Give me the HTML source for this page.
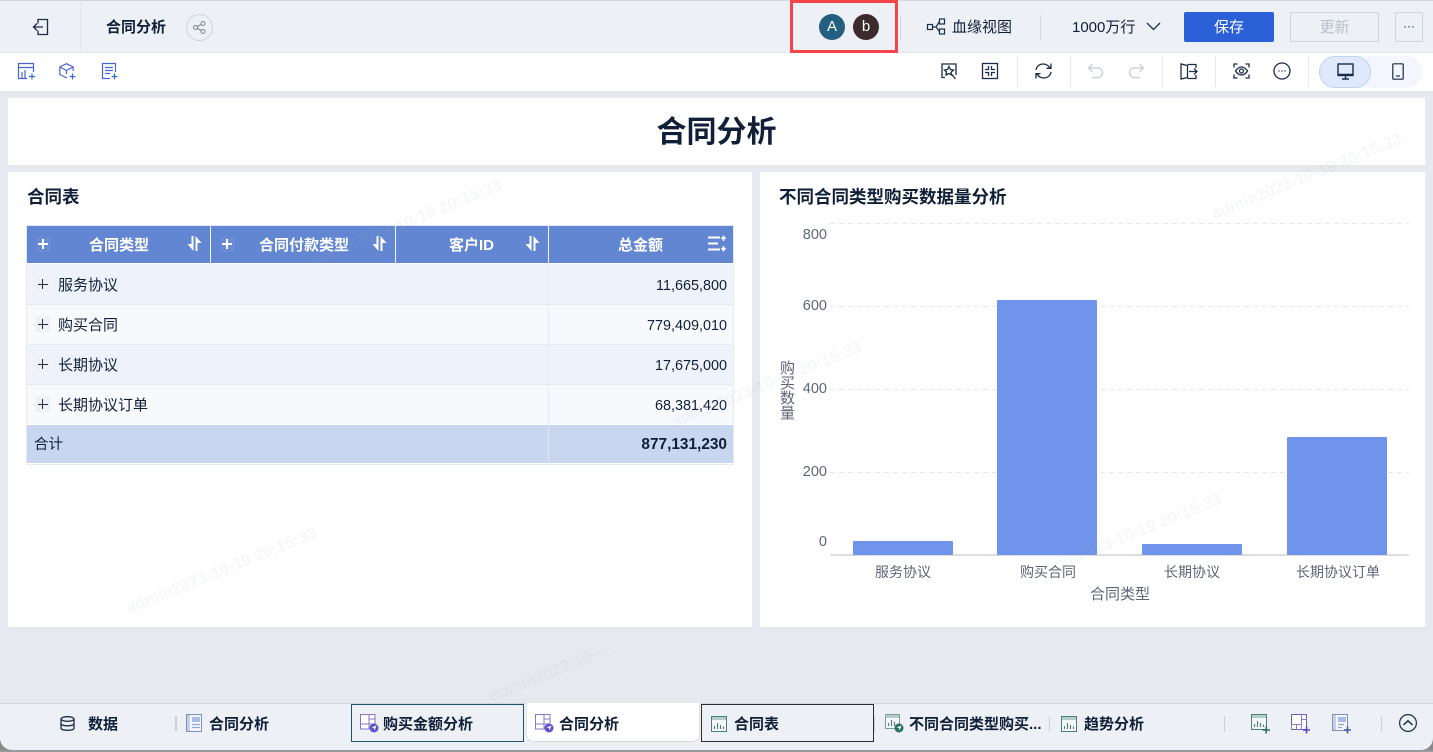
<!DOCTYPE html>
<html lang="zh"><head><meta charset="utf-8"><title>合同分析</title>
<style>
*{box-sizing:border-box}
html,body{margin:0;padding:0;width:1433px;height:752px;overflow:hidden;background:#e8e9ee;font-family:"Liberation Sans","Noto Sans CJK SC",sans-serif;color:#0f1f38}
.a{position:absolute}
.t{position:absolute;white-space:nowrap;line-height:22px;font-size:15px}
.b{font-weight:700}
svg{position:absolute;overflow:visible;fill:none}
.wm{position:absolute;white-space:nowrap;font-size:16.5px;font-weight:700;color:rgba(170,175,190,.1);transform:rotate(-22deg);transform-origin:0 100%;line-height:20px;z-index:5}
.r{text-align:right}
.n{font-size:14.4px}
.th{color:#fff;font-weight:700}
.plus{position:absolute;width:15px;height:15px;background:#eef0f4}
.plus:before{content:"";position:absolute;left:3px;top:7px;width:10px;height:1px;background:#1c2a40}
.plus:after{content:"";position:absolute;left:7px;top:2px;width:1px;height:10px;background:#1c2a40}
.hp{position:absolute;width:15px;height:15px;background:#6a8cd6}
.hp:before{content:"";position:absolute;left:2px;top:6px;width:10px;height:2px;background:#fff}
.hp:after{content:"";position:absolute;left:6px;top:2px;width:2px;height:10px;background:#fff}
.ax{color:#5d6675;font-size:14px;line-height:20px}
</style></head><body>

<!-- top bar -->
<div class="a" style="left:0;top:0;width:1433px;height:53px;background:#edf0f5;border-top:1px solid #d5d6da;border-bottom:1px solid #e3e5ea"></div>
<div class="a" style="left:80px;top:2px;width:1px;height:50px;background:#e3e6ec"></div>
<svg style="left:32px;top:18px" width="18" height="18" viewBox="0 0 18 18" stroke="#1a2c48" stroke-width="1.300"><path d="M6 12.500V16.500H15.500V1.500H6V5.500"/><path d="M11 9H1.500M5 5.500L1.500 9L5 12.500"/></svg>
<div class="t b" style="left:106px;top:17px">合同分析</div>
<div class="a" style="left:186px;top:14px;width:27px;height:27px;border:1px solid #cfd2d9;border-radius:50%"></div>
<svg style="left:193px;top:21px" width="13" height="13" viewBox="0 0 13 13" stroke="#7c8493" stroke-width="1"><circle cx="2.500" cy="6.500" r="2"/><circle cx="10" cy="2.500" r="2"/><circle cx="10" cy="10.500" r="2"/><path d="M4.300 5.500L8.200 3.500M4.300 7.500L8.200 9.500"/></svg>

<div class="a" style="left:819px;top:14px;width:26px;height:26px;border-radius:50%;background:#23607f;color:#fff;font-size:15px;line-height:26px;text-align:center">A</div>
<div class="a" style="left:853px;top:14px;width:26px;height:26px;border-radius:50%;background:#3b2a2e;color:#fff;font-size:15px;line-height:26px;text-align:center">b</div>
<div class="a" style="left:790px;top:0;width:108px;height:53px;border:3px solid #f5444a;z-index:6"></div>

<div class="a" style="left:900px;top:15px;width:1px;height:25px;background:#d5d8de"></div>
<svg style="left:927px;top:18px" width="19" height="18" viewBox="0 0 19 18" stroke="#1a2c48" stroke-width="1.200"><rect x=".5" y="6.500" width="5" height="5"/><rect x="12.500" y="1" width="5" height="5"/><rect x="12.500" y="11" width="5" height="5"/><path d="M5.500 9H9L12.500 3.500M9 9L12.500 13.500"/></svg>
<div class="t" style="left:952px;top:17px">血缘视图</div>
<div class="a" style="left:1040px;top:15px;width:1px;height:25px;background:#d5d8de"></div>
<div class="t" style="left:1072px;top:17px">1000万行</div>
<svg style="left:1146px;top:22px" width="15" height="9" viewBox="0 0 15 9" stroke="#1a2c48" stroke-width="1.300"><path d="M1 1L7.500 7.500L14 1"/></svg>
<div class="a" style="left:1184px;top:12px;width:90px;height:30px;background:#2b60d9;border-radius:2px;color:#fff;font-size:15px;line-height:32px;text-align:center">保存</div>
<div class="a" style="left:1290px;top:12px;width:89px;height:30px;border:1px solid #cfd3da;border-radius:2px;color:#b9bec8;font-size:15px;line-height:30px;text-align:center">更新</div>
<div class="a" style="left:1395px;top:12px;width:28px;height:30px;border:1px solid #cfd3da;border-radius:2px;color:#1a2c48;font-size:12px;line-height:26px;text-align:center">···</div>

<!-- toolbar -->
<div class="a" style="left:0;top:53px;width:1433px;height:38px;background:#fff"></div>
<svg style="left:18px;top:63px" width="17" height="17" viewBox="0 0 17 17" stroke="#4a63d8" stroke-width="1.200"><path d="M9 15.500H.5V.5H15.500V9M.5 4.500H15.500M4 15V9M7 15V7"/><path d="M11 13.500H17M14 10.500V16.500" stroke="#2c6fd9"/></svg>
<svg style="left:59px;top:63px" width="17" height="17" viewBox="0 0 17 17" stroke="#4a63d8" stroke-width="1.200"><path d="M8 15L.8 11.500V4L7.500 .7L14.200 4V8M.8 4L7.500 7.500L14.200 4M7.500 7.500V11"/><path d="M10.500 13.500H16.500M13.500 10.500V16.500" stroke="#2c6fd9"/></svg>
<svg style="left:101px;top:63px" width="17" height="17" viewBox="0 0 17 17" stroke="#4a63d8" stroke-width="1.200"><path d="M9 15.500H1.500V.5H14.500V9M4 4.500H12M4 7.500H12M4 10.500H9"/><path d="M10.500 13.500H16.500M13.500 10.500V16.500" stroke="#2c6fd9"/></svg>

<svg style="left:941px;top:63px" width="17" height="17" viewBox="0 0 17 17" stroke="#1a2c48" stroke-width="1.300"><path d="M4 14.500H1V1H15V12"/><path d="M8 3.500L9.500 6.500L12.500 7L10 9.300L10.500 12L8 10.500L5 12L5.500 9L3.500 7L6.500 6.500ZM11 11.500L14.500 16"/></svg>
<svg style="left:982px;top:63px" width="16" height="16" viewBox="0 0 16 16" stroke="#1a2c48" stroke-width="1.300"><rect x=".5" y=".5" width="15" height="15"/><path d="M6.500 3V6.500H3M9.500 3V6.500H13M6.500 13V9.500H3M9.500 13V9.500H13"/></svg>
<div class="a" style="left:1017px;top:56px;width:1px;height:31px;background:#e6e8ec"></div>
<svg style="left:1034px;top:62px" width="19" height="18" viewBox="0 0 19 18" stroke="#1a2c48" stroke-width="1.300"><path d="M2 8C2.500 4.500 5.500 2 9 2C12 2 14.500 3.500 16 6M17 1.500V6.300H12.500"/><path d="M17 10C16.500 13.500 13.500 16 10 16C7 16 4.500 14.500 3 12M2 16.500V11.700H6.500"/></svg>
<div class="a" style="left:1070px;top:56px;width:1px;height:31px;background:#e6e8ec"></div>
<svg style="left:1087px;top:63px" width="17" height="16" viewBox="0 0 17 16" stroke="#ccd1da" stroke-width="1.500"><path d="M5.500 1L1.500 5L5.500 9M1.500 5H11C13.500 5 15.500 7 15.500 9.500C15.500 12 13.500 14.500 11 14.500H5"/></svg>
<svg style="left:1128px;top:63px" width="17" height="16" viewBox="0 0 17 16" stroke="#ccd1da" stroke-width="1.500"><path d="M11.500 1L15.500 5L11.500 9M15.500 5H6C3.500 5 1.500 7 1.500 9.500C1.500 12 3.500 14.500 6 14.500H12"/></svg>
<div class="a" style="left:1162px;top:56px;width:1px;height:31px;background:#e6e8ec"></div>
<svg style="left:1180px;top:63px" width="18" height="17" viewBox="0 0 18 17" stroke="#1a2c48" stroke-width="1.300"><path d="M7.500 2.500L1 1V16L7.500 14.500ZM7.500 1.500H16V5M16 12V15.500H7.500M9 8.500H17M14 5.500L17 8.500L14 11.500"/></svg>
<div class="a" style="left:1215px;top:56px;width:1px;height:31px;background:#e6e8ec"></div>
<svg style="left:1233px;top:63px" width="17" height="16" viewBox="0 0 17 16" stroke="#1a2c48" stroke-width="1.300"><path d="M1 4.500V1H4.500M12.500 1H16V4.500M1 11.500V15H4.500M12.500 15H16V11.500"/><path d="M2.500 8C4.500 5 6.500 4 8.500 4C10.500 4 12.500 5 14.500 8C12.500 11 10.500 12 8.500 12C6.500 12 4.500 11 2.500 8Z"/><circle cx="8.500" cy="8" r="2"/></svg>
<svg style="left:1273px;top:62px" width="18" height="18" viewBox="0 0 18 18" stroke="#1a2c48" stroke-width="1.300"><circle cx="9" cy="9" r="8"/><path d="M5.500 9H6.500M8.500 9H9.500M11.500 9H12.500" stroke-width="1.500"/></svg>
<div class="a" style="left:1308px;top:56px;width:1px;height:31px;background:#e6e8ec"></div>
<div class="a" style="left:1319px;top:56px;width:104px;height:32px;border-radius:16px;background:#f3f6fc"></div>
<div class="a" style="left:1319px;top:56px;width:52px;height:32px;border-radius:16px;background:#dfe9fb;border:1px solid #bfd3f5"></div>
<svg style="left:1337px;top:63px" width="17" height="17" viewBox="0 0 17 17" stroke="#1a2c48" stroke-width="1.400"><rect x="1" y="1" width="15" height="11.500"/><path d="M1 11.500H16M8.500 12.500V16M5 16H12"/></svg>
<svg style="left:1392px;top:63px" width="12" height="17" viewBox="0 0 12 17" stroke="#1a2c48" stroke-width="1.200"><rect x=".8" y=".8" width="10.400" height="15.400" rx="1"/><path d="M4 13H8"/></svg>

<!-- title -->
<div class="a" style="left:8px;top:98px;width:1417px;height:67px;background:#fff"></div>
<div class="t b" style="left:8px;top:112px;width:1417px;text-align:center;font-size:30px;line-height:42px">合同分析</div>

<!-- left panel -->
<div class="a" style="left:8px;top:172px;width:744px;height:455px;background:#fff"></div>
<div class="t b" style="left:27px;top:186px;font-size:17.500px;line-height:22px">合同表</div>

<div class="a" style="left:26px;top:225px;width:708px;height:240px;border:1px solid #e3ebf5;background:#fff"></div>
<div class="a" style="left:27px;top:226px;width:706px;height:37px;background:#6286d2"></div>
<div class="a" style="left:210px;top:226px;width:1px;height:37px;background:#f3f6fc"></div>
<div class="a" style="left:395px;top:226px;width:1px;height:37px;background:#f3f6fc"></div>
<div class="a" style="left:548px;top:226px;width:1px;height:37px;background:#f3f6fc"></div>
<div class="hp" style="left:36px;top:237px"></div>
<div class="hp" style="left:220px;top:237px"></div>
<div class="t th" style="left:89px;top:235px">合同类型</div>
<div class="t th" style="left:259px;top:235px">合同付款类型</div>
<div class="t th" style="left:449px;top:235px">客户ID</div>
<div class="t th" style="left:618px;top:235px">总金额</div>
<svg style="left:187px;top:236px" width="15" height="15" viewBox="0 0 15 15"><path d="M6.500 0V15L.5 8H4.500V0ZM8.500 15V0L14.500 7H10.500V15Z" fill="#fff"/></svg>
<svg style="left:372px;top:236px" width="15" height="15" viewBox="0 0 15 15"><path d="M6.500 0V15L.5 8H4.500V0ZM8.500 15V0L14.500 7H10.500V15Z" fill="#fff"/></svg>
<svg style="left:525px;top:236px" width="15" height="15" viewBox="0 0 15 15"><path d="M6.500 0V15L.5 8H4.500V0ZM8.500 15V0L14.500 7H10.500V15Z" fill="#fff"/></svg>
<svg style="left:708px;top:236px" width="18" height="15" viewBox="0 0 18 15" stroke="#fff" stroke-width="2"><path d="M0 1.500H12M0 7.500H10M0 13.500H12"/><path d="M15.500 5V0M13.500 3L15.500 .5L17.500 3M15.500 10V15M13.500 12L15.500 14.500L17.500 12" stroke-width="1.500"/></svg>

<div class="a" style="left:27px;top:264px;width:706px;height:40px;background:#eef2fa"></div>
<div class="a" style="left:27px;top:305px;width:706px;height:39px;background:#f8f9fd"></div>
<div class="a" style="left:27px;top:345px;width:706px;height:39px;background:#eef2fa"></div>
<div class="a" style="left:27px;top:385px;width:706px;height:39px;background:#f8f9fd"></div>
<div class="a" style="left:27px;top:304px;width:706px;height:1px;background:#e3ebf5"></div>
<div class="a" style="left:27px;top:344px;width:706px;height:1px;background:#e3ebf5"></div>
<div class="a" style="left:27px;top:384px;width:706px;height:1px;background:#e3ebf5"></div>
<div class="a" style="left:27px;top:425px;width:706px;height:38px;background:#c9d6f0"></div>
<div class="a" style="left:548px;top:264px;width:1px;height:200px;background:#e3ebf5"></div>

<div class="plus" style="left:35px;top:277px"></div><div class="t" style="left:58px;top:275px">服务协议</div>
<div class="plus" style="left:35px;top:317px"></div><div class="t" style="left:58px;top:315px">购买合同</div>
<div class="plus" style="left:35px;top:357px"></div><div class="t" style="left:58px;top:355px">长期协议</div>
<div class="plus" style="left:35px;top:397px"></div><div class="t" style="left:58px;top:395px">长期协议订单</div>
<div class="t r n" style="left:600px;top:275px;width:127px">11,665,800</div>
<div class="t r n" style="left:600px;top:315px;width:127px">779,409,010</div>
<div class="t r n" style="left:600px;top:355px;width:127px">17,675,000</div>
<div class="t r n" style="left:600px;top:395px;width:127px">68,381,420</div>
<div class="t" style="left:34px;top:434px;font-size:14.500px">合计</div>
<div class="t r b" style="left:600px;top:434px;width:127px;font-size:15.400px">877,131,230</div>

<!-- right panel -->
<div class="a" style="left:760px;top:172px;width:665px;height:455px;background:#fff"></div>
<div class="t b" style="left:779px;top:186px;font-size:17.500px;line-height:22px">不同合同类型购买数据量分析</div>

<svg style="left:0;top:0" width="1433" height="752">
<g stroke="#e6e8eb" stroke-width="1" stroke-dasharray="5 4">
<path d="M830 223.500H1409M830 306.500H1409M830 389.500H1409M830 472.500H1409"/>
</g>
<path d="M830 555H1409" stroke="#dcdde0" stroke-width="2"/>
<g fill="#7093ec">
<rect x="853" y="541" width="100" height="14" rx="1"/>
<rect x="997" y="300" width="100" height="255" rx="1"/>
<rect x="1142" y="544" width="100" height="11" rx="1"/>
<rect x="1287" y="437" width="100" height="118" rx="1"/>
</g>
</svg>
<div class="t ax r" style="left:787px;top:225px;width:40px;font-size:14.500px">800</div>
<div class="t ax r" style="left:787px;top:296px;width:40px;font-size:14.500px">600</div>
<div class="t ax r" style="left:787px;top:379px;width:40px;font-size:14.500px">400</div>
<div class="t ax r" style="left:787px;top:462px;width:40px;font-size:14.500px">200</div>
<div class="t ax r" style="left:787px;top:532px;width:40px;font-size:14.500px">0</div>
<div class="t ax" style="left:780px;top:361px;width:15px;line-height:15px;white-space:normal;font-size:15px">购买数量</div>
<div class="t ax" style="left:875px;top:562px">服务协议</div>
<div class="t ax" style="left:1020px;top:562px">购买合同</div>
<div class="t ax" style="left:1164px;top:562px">长期协议</div>
<div class="t ax" style="left:1296px;top:562px">长期协议订单</div>
<div class="t ax" style="left:1090px;top:585px;font-size:15px">合同类型</div>

<!-- watermarks -->
<div class="wm" style="left:131px;top:598px">admin2023-10-19 20:15:33</div>
<div class="wm" style="left:316px;top:250px">admin2023-10-19 20:15:33</div>
<div class="wm" style="left:1216px;top:204px">admin2023-10-19 20:15:33</div>
<div class="wm" style="left:676px;top:412px">admin2023-10-19 20:15:33</div>
<div class="wm" style="left:1036px;top:564px">admin2023-10-19 20:15:33</div>
<div class="wm" style="left:494px;top:686px">admin2023-10-···</div>

<!-- bottom bar -->
<div class="a" style="left:0;top:735px;width:20px;height:17px;background:#8a8a8a"></div>
<div class="a" style="left:1413px;top:735px;width:20px;height:17px;background:#8a8a8a"></div>
<div class="a" style="left:0;top:703px;width:1433px;height:47px;background:#edf0f5;border-top:1px solid #d3d5da;border-radius:0 0 12px 12px"></div>
<div class="a" style="left:0;top:750px;width:1433px;height:2px;background:#9a9a9a"></div>
<svg style="left:60px;top:716px" width="15" height="15" viewBox="0 0 15 15" stroke="#1a2c48" stroke-width="1.300"><ellipse cx="7.500" cy="3" rx="6.500" ry="2.300"/><path d="M1 3V12C1 13.500 4 14.300 7.500 14.300C11 14.300 14 13.500 14 12V3M1 7.500C1 9 4 9.800 7.500 9.800C11 9.800 14 9 14 7.500"/></svg>
<div class="t b" style="left:88px;top:714px">数据</div>
<div class="a" style="left:175px;top:716px;width:2px;height:15px;background:#ccd0d8"></div>
<svg style="left:186px;top:714px" width="17" height="18" viewBox="0 0 17 18"><rect x=".5" y=".5" width="15" height="17" stroke="#7d90b8" fill="#f4f6fb"/><rect x="1" y="1" width="3" height="16" fill="#c5d0e6"/><rect x="6" y="3" width="8" height="5" fill="#a9bce6"/><path d="M6 10.500H14M6 13.500H14" stroke="#8ea6d8" stroke-width="1.300"/></svg>
<div class="t b" style="left:209px;top:714px">合同分析</div>

<div class="a" style="left:351px;top:704px;width:173px;height:38px;border:1px solid #1d5270"></div>
<svg style="left:360px;top:714px" width="19" height="19" viewBox="0 0 19 19"><path d="M.5.500H15V15H.5ZM.5 10H15M9 .5V15M9 5H15" stroke="#8578c6" fill="#fff"/><circle cx="14" cy="14" r="4.500" fill="#5e55c8"/><path d="M11.500 13.500L16.500 11.500L14.500 16.500L14 14Z" fill="#fff"/></svg>
<div class="t b" style="left:383px;top:714px">购买金额分析</div>

<div class="a" style="left:526px;top:703px;width:174px;height:39px;background:#fff;border-radius:0 0 8px 8px;border-bottom:1px solid #d6d9df;border-right:1px solid #e0e3e8;border-left:1px solid #e0e3e8"></div>
<svg style="left:535px;top:714px" width="19" height="19" viewBox="0 0 19 19"><path d="M.5.500H15V15H.5ZM.5 10H15M9 .5V15M9 5H15" stroke="#8578c6" fill="#fff"/><circle cx="14" cy="14" r="4.500" fill="#5e55c8"/><path d="M11.500 13.500L16.500 11.500L14.500 16.500L14 14Z" fill="#fff"/></svg>
<div class="t b" style="left:559px;top:714px">合同分析</div>

<div class="a" style="left:701px;top:704px;width:173px;height:38px;border:1px solid #2c2c34"></div>
<svg style="left:711px;top:716px" width="16" height="16" viewBox="0 0 16 16"><rect x=".5" y=".5" width="15" height="15" stroke="#4d7f78" fill="#f4f7f7"/><rect x="1" y="1" width="14" height="3" fill="#b5cdc9"/><path d="M3.500 13V10M6.500 13V7M9.500 13V9M12.500 13V10.500" stroke="#4d7f78" stroke-width="1.100"/></svg>
<div class="t b" style="left:734px;top:714px">合同表</div>
<div class="a" style="left:874px;top:716px;width:1px;height:16px;background:#ccd0d8"></div>
<svg style="left:885px;top:714px" width="19" height="19" viewBox="0 0 19 19"><rect x=".5" y=".5" width="14" height="14" stroke="#7d9d98" fill="#f4f7f7"/><rect x="1" y="1" width="13" height="3" fill="#b5cdc9"/><path d="M3.500 12V9M6.500 12V6M9.500 12V8" stroke="#4d7f78" stroke-width="1.100"/><circle cx="14" cy="14" r="4.500" fill="#2b7065"/><path d="M11.500 13.500L16.500 11.500L14.500 16.500L14 14Z" fill="#fff"/></svg>
<div class="t b" style="left:909px;top:714px">不同合同类型购买...</div>
<div class="a" style="left:1049px;top:716px;width:1px;height:16px;background:#ccd0d8"></div>
<svg style="left:1061px;top:716px" width="16" height="16" viewBox="0 0 16 16"><rect x=".5" y=".5" width="15" height="15" stroke="#4d7f78" fill="#f4f7f7"/><rect x="1" y="1" width="14" height="3" fill="#b5cdc9"/><path d="M3.500 13V10M6.500 13V7M9.500 13V9M12.500 13V10.500" stroke="#4d7f78" stroke-width="1.100"/></svg>
<div class="t b" style="left:1084px;top:714px">趋势分析</div>

<div class="a" style="left:1224px;top:716px;width:1px;height:16px;background:#ccd0d8"></div>
<svg style="left:1251px;top:714px" width="20" height="20" viewBox="0 0 20 20"><rect x=".5" y=".5" width="15" height="15" stroke="#4d7f78" fill="#f4f7f7"/><rect x="1" y="1" width="14" height="3" fill="#b5cdc9"/><path d="M3.500 13V10M6.500 13V7M9.500 13V9M12.500 13V10.500" stroke="#4d7f78" stroke-width="1.100"/><path d="M11.500 16H19M15.200 12.500V19.500" stroke="#2b7065" stroke-width="1.600"/></svg>
<svg style="left:1291px;top:714px" width="20" height="20" viewBox="0 0 20 20"><path d="M.5.500H15.500V15.500H.5Z" stroke="#6a5fc0" fill="#fff"/><path d="M10.500 .5V10.500H.5V15.500M5.500 10.500V15.500M10.500 10.500V15.500M10.500 5.500H15.500" stroke="#8a7fd0"/><path d="M12 16H19M15.500 12.500V19.500" stroke="#5448bc" stroke-width="1.600"/></svg>
<svg style="left:1332px;top:714px" width="20" height="20" viewBox="0 0 20 20"><rect x=".5" y=".5" width="15" height="16" stroke="#7d90b8" fill="#f4f6fb"/><rect x="1" y="1" width="3" height="15" fill="#c5d0e6"/><rect x="6" y="3" width="8" height="5" fill="#a9bce6"/><path d="M6 10.500H12M6 13.500H10" stroke="#8ea6d8" stroke-width="1.300"/><path d="M12 16H19M15.500 12.500V19.500" stroke="#3d5f9e" stroke-width="1.600"/></svg>
<div class="a" style="left:1381px;top:716px;width:1px;height:16px;background:#ccd0d8"></div>
<svg style="left:1399px;top:714px" width="18" height="18" viewBox="0 0 18 18" stroke="#1a2c48" stroke-width="1.200"><circle cx="9" cy="9" r="8.400"/><path d="M4.500 11L9 6.800L13.500 11" stroke-width="1.500"/></svg>
</body></html>
